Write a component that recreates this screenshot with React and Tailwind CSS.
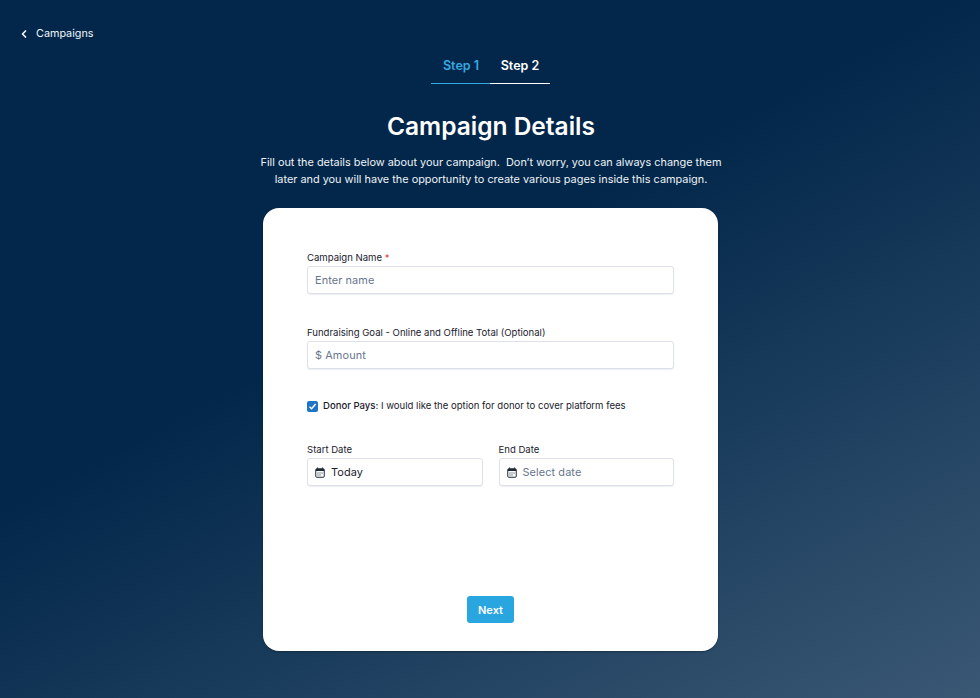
import React from "react";
import { ChevronLeft } from "lucide-react";

const CalendarIcon = () => (
  <svg width="10" height="11" viewBox="0 0 10 11" fill="none" className="shrink-0">
    <path d="M2.5 0.5v2M7.5 0.5v2" stroke="#1f2937" strokeWidth="1" />
    <rect x="0.75" y="1.75" width="8.5" height="8.5" rx="1" stroke="#1f2937" strokeWidth="1" />
    <rect x="1" y="2" width="8" height="2" fill="#1f2937" />
    <path d="M2.5 6h1M4.5 6h1M6.5 6h1M2.5 8h1M4.5 8h1" stroke="#1f2937" strokeWidth="1" />
  </svg>
);

const Field = ({ label, children, className = "" }) => (
  <div className={className}>
    <label className="block text-[9.55px] leading-[13px] text-[#1a202c] mb-[2px]">{label}</label>
    {children}
  </div>
);

const Input = ({ children }) => (
  <div className="h-[28px] bg-white border border-[#dde2ea] rounded-[3px] shadow-[0_1px_1px_rgba(30,50,90,0.08)] px-[7px] flex items-center text-[10.9px] tracking-[0.1px] text-[#68758f]">
    {children}
  </div>
);

const App = () => {
  return (
    <div
      className="w-[980px] h-[698px] overflow-hidden text-white bg-[linear-gradient(152deg,#02274a_0%,#02274a_42%,#3a5874_100%)] relative"
      style={{ fontFamily: "Inter, sans-serif" }}
    >
      <div className="flex items-center pl-[18px] pt-[27px] h-[40px] text-[10.8px] leading-[14px] text-[#f1f5f9]">
        <ChevronLeft size={12} strokeWidth={3.5} />
        <span className="ml-[6px]">Campaigns</span>
      </div>

      <div className="flex justify-center mt-[8px] pl-[1px]">
        <div className="w-[59px] h-[36px] pt-[2px] pl-[1px] border-b-[1.5px] border-[#36a9e1] flex items-center justify-center text-[12.5px] font-semibold text-[#36a9e1]">
          Step 1
        </div>
        <div className="w-[60px] h-[36px] pt-[2px] border-b-[1.5px] border-white flex items-center justify-center text-[12.5px] font-semibold">
          Step 2
        </div>
      </div>

      <h1 className="text-center pl-[2px] text-[24.5px] leading-[30px] font-semibold mt-[27px]">Campaign Details</h1>
      <p className="text-center pl-[2px] text-[10.9px] leading-[17px] mt-[13px] text-[#eef2f6] whitespace-pre">
        {"Fill out the details below about your campaign.  Don’t worry, you can always change them\nlater and you will have the opportunity to create various pages inside this campaign."}
      </p>

      <div className="w-[455px] h-[443px] ml-[263px] mt-[20px] bg-white rounded-[16px] px-[44px] pt-[43px] flex flex-col shadow-[0_1px_2px_rgba(0,0,0,0.3)]">
        <Field label={<>Campaign Name <span className="text-[#e53e3e]">*</span></>}>
          <Input>Enter name</Input>
        </Field>

        <Field label="Fundraising Goal - Online and Offline Total (Optional)" className="mt-[32px]">
          <Input>$ Amount</Input>
        </Field>

        <div className="flex items-center mt-[30px] h-[14px] text-[9.55px] text-[#1a202c]">
          <span className="w-[11px] h-[11px] rounded-[2px] bg-[#1f74c4] flex items-center justify-center mr-[5px]">
            <svg width="9" height="9" viewBox="0 0 9 9" fill="none">
              <path d="M1.5 4.8 3.6 6.8 7.6 2" stroke="white" strokeWidth="1.4" />
            </svg>
          </span>
          <span><span className="font-medium">Donor Pays:</span> I would like the option for donor to cover platform fees</span>
        </div>

        <div className="flex gap-[16px] mt-[30px]">
          <Field label="Start Date" className="flex-1">
            <Input>
              <CalendarIcon />
              <span className="ml-[6px] text-[#1a202c]">Today</span>
            </Input>
          </Field>
          <Field label="End Date" className="flex-1">
            <Input>
              <CalendarIcon />
              <span className="ml-[6px]">Select date</span>
            </Input>
          </Field>
        </div>

        <button className="w-[47px] h-[27px] pt-[1px] mx-auto mt-[110px] bg-[#29a5e0] rounded-[3px] text-white text-[11px] font-semibold">
          Next
        </button>
      </div>
    </div>
  );
};

export default App;
